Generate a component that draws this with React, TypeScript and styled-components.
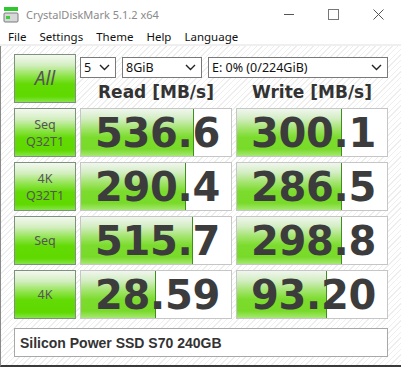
import React from "react";
import styled, { createGlobalStyle } from "styled-components";

const Global = createGlobalStyle`
  html, body {
    margin: 0;
    padding: 0;
    background: #fff;
  }
`;

type Row = { label: string[]; read: number; write: number };

const rows: Row[] = [
  { label: ["Seq", "Q32T1"], read: 536.6, write: 300.1 },
  { label: ["4K", "Q32T1"], read: 290.4, write: 286.5 },
  { label: ["Seq"], read: 515.7, write: 298.8 },
  { label: ["4K"], read: 28.59, write: 93.2 },
];

// CrystalDiskMark draws its meters on a log scale
const meter = (v: number) => Math.min(1, Math.log10(v * 10) / 5) * 100;

const fmt = (v: number) => (v >= 100 ? v.toFixed(1) : v.toFixed(2));

function Chevron() {
  return (
    <svg width="11" height="7" viewBox="0 0 11 7">
      <polyline points="1,1 5.5,5.5 10,1" fill="none" stroke="#222" strokeWidth="1.4" />
    </svg>
  );
}

function AppIcon() {
  return (
    <svg width="16" height="18" viewBox="0 0 16 18">
      <rect x="1" y="2" width="14" height="4" fill="#2ec82e" />
      <rect x="1" y="8" width="14" height="9" rx="1" fill="#d8d8d8" stroke="#7a7a7a" />
      <rect x="3" y="11" width="4" height="3" fill="#3bd13b" />
    </svg>
  );
}

export default function App() {
  return (
    <Window>
      <Global />
      <TitleBar>
        <AppIcon />
        <Title>CrystalDiskMark 5.1.2 x64</Title>
        <Controls>
          <svg width="10" height="10" viewBox="0 0 10 10">
            <line x1="0" y1="5.5" x2="10" y2="5.5" stroke="#555" />
          </svg>
          <svg width="11" height="11" viewBox="0 0 11 11">
            <rect x="0.5" y="0.5" width="10" height="10" fill="none" stroke="#777" />
          </svg>
          <svg width="11" height="11" viewBox="0 0 11 11">
            <path d="M0.5 0.5 L10.5 10.5 M10.5 0.5 L0.5 10.5" stroke="#555" />
          </svg>
        </Controls>
      </TitleBar>
      <MenuBar>
        <MenuItem>File</MenuItem>
        <MenuItem>Settings</MenuItem>
        <MenuItem>Theme</MenuItem>
        <MenuItem>Help</MenuItem>
        <MenuItem>Language</MenuItem>
      </MenuBar>
      <Content>
        <Grid>
          <TestButton $big>All</TestButton>
          <HeaderArea>
            <Selects>
              <Select $w={36}>
                5<Chevron />
              </Select>
              <Select $w={80}>
                8GiB<Chevron />
              </Select>
              <Select $grow>
                E: 0% (0/224GiB)<Chevron />
              </Select>
            </Selects>
            <Heads>
              <Head>Read [MB/s]</Head>
              <Head>Write [MB/s]</Head>
            </Heads>
          </HeaderArea>
          {rows.map((r, i) => (
            <React.Fragment key={i}>
              <TestButton>
                {r.label.map((l) => (
                  <span key={l}>{l}</span>
                ))}
              </TestButton>
              <Cell>
                <Fill style={{ width: `${meter(r.read)}%` }} />
                <Value>{fmt(r.read)}</Value>
              </Cell>
              <Cell>
                <Fill style={{ width: `${meter(r.write)}%` }} />
                <Value>{fmt(r.write)}</Value>
              </Cell>
            </React.Fragment>
          ))}
        </Grid>
        <NameBox>Silicon Power SSD S70 240GB</NameBox>
      </Content>
    </Window>
  );
}

const Window = styled.div`
  width: 401px;
  height: 367px;
  display: flex;
  flex-direction: column;
  background: #fff;
  overflow: hidden;
`;

const TitleBar = styled.div`
  height: 28px;
  display: flex;
  align-items: center;
  padding-left: 3px;
  gap: 7px;
`;

const Title = styled.div`
  font-family: "Noto Sans", sans-serif;
  font-size: 11px;
  color: #8a8a8a;
  flex: 1;
`;

const Controls = styled.div`
  display: flex;
  align-items: center;
  gap: 34px;
  padding-right: 17px;
`;

const MenuBar = styled.div`
  height: 16px;
  display: flex;
  align-items: center;
  padding-left: 8px;
  gap: 13px;
  border-bottom: 2px solid #efefef;
  font-family: "Noto Sans", sans-serif;
  font-size: 11.5px;
  color: #111;
`;

const MenuItem = styled.span``;

const Content = styled.div`
  flex: 1;
  border-left: 1px solid #8a8a8a;
  border-bottom: 2px solid #3a3a3a;
  padding: 8px 0 0 13px;
  background: repeating-linear-gradient(
    -45deg,
    #fff 0px,
    #fff 3px,
    #eeeeee 3px,
    #eeeeee 4px
  );
`;

const Grid = styled.div`
  display: grid;
  grid-template-columns: 62px 152px 152px;
  grid-auto-rows: 49px;
  column-gap: 4px;
  row-gap: 5px;
`;

const TestButton = styled.div<{ $big?: boolean }>`
  box-sizing: border-box;
  border: 1px solid #7d917d;
  display: flex;
  flex-direction: column;
  align-items: center;
  justify-content: center;
  font-family: "Noto Sans", sans-serif;
  font-size: ${(p) => (p.$big ? "19px" : "12.5px")};
  font-style: ${(p) => (p.$big ? "italic" : "normal")};
  line-height: ${(p) => (p.$big ? "1" : "17px")};
  color: #555;
  background: linear-gradient(
    to bottom,
    #f4f8f2 0%,
    #d2eebe 22%,
    #8ee44a 45%,
    #62da04 62%,
    #60d900 88%,
    #86e44a 100%
  );
`;

const HeaderArea = styled.div`
  grid-column: 2 / 4;
  display: flex;
  flex-direction: column;
  padding-top: 3px;
`;

const Selects = styled.div`
  display: flex;
  gap: 6px;
  height: 21px;
`;

const Select = styled.div<{ $w?: number; $grow?: boolean }>`
  box-sizing: border-box;
  width: ${(p) => (p.$w ? `${p.$w}px` : "auto")};
  flex: ${(p) => (p.$grow ? "1" : "none")};
  border: 1px solid #7a7a7a;
  background: #fff;
  display: flex;
  align-items: center;
  justify-content: space-between;
  padding: 0 5px 0 3px;
  font-family: "Noto Sans", sans-serif;
  font-size: 12.5px;
  color: #111;
`;

const Heads = styled.div`
  display: grid;
  grid-template-columns: 152px 152px;
  column-gap: 4px;
  flex: 1;
  align-items: center;
`;

const Head = styled.div`
  text-align: center;
  font-family: "DejaVu Sans", sans-serif;
  font-weight: bold;
  font-size: 17px;
  color: #333;
  padding-top: 3px;
`;

const Cell = styled.div`
  position: relative;
  box-sizing: border-box;
  border: 1px solid #c6c6c6;
  background: #fff;
  display: flex;
  align-items: center;
  justify-content: center;
  overflow: hidden;
`;

const Fill = styled.div`
  position: absolute;
  left: 0;
  top: 0;
  bottom: 0;
  border-right: 1px solid #3f8f1f;
  background: linear-gradient(
    to bottom,
    #f0f6ee 0%,
    #d4eec4 20%,
    #a2e46c 42%,
    #7cdc2e 60%,
    #78da28 85%,
    #a6e874 100%
  );
`;

const Value = styled.div`
  position: relative;
  font-family: "DejaVu Sans", sans-serif;
  font-weight: bold;
  font-size: 40px;
  color: #3c3c3c;
  letter-spacing: -0.3px;
  padding-left: 3px;
`;

const NameBox = styled.div`
  box-sizing: border-box;
  margin-top: 9px;
  width: 374px;
  height: 29px;
  border: 1px solid #a8a8a8;
  background: #fff;
  display: flex;
  align-items: center;
  padding-left: 5px;
  font-family: "Liberation Sans", sans-serif;
  font-weight: bold;
  font-size: 14px;
  color: #333;
`;
